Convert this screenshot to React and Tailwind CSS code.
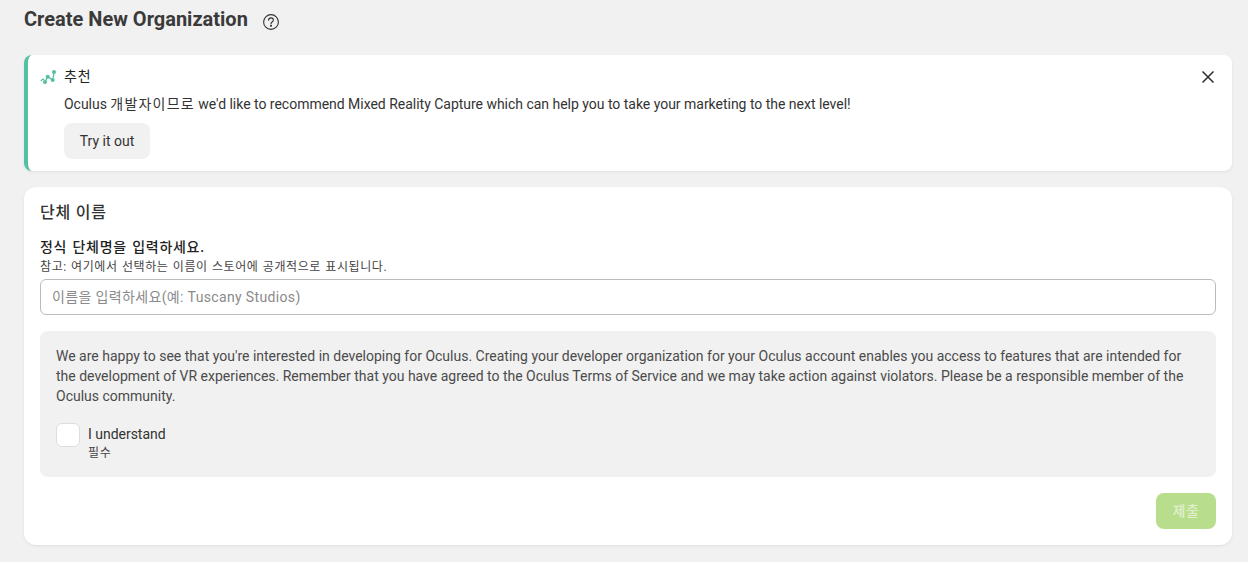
const FONT = "font-['Roboto','Noto_Sans_CJK_KR',sans-serif]"

function HelpIcon() {
  return (
    <svg width="16" height="16" viewBox="0 0 16 16" fill="none" stroke="#333" strokeWidth="1.1" strokeLinecap="round">
      <circle cx="8" cy="8" r="7.4" />
      <path d="M5.6 6.2c0-1.4 1.1-2.3 2.4-2.3s2.4.9 2.4 2.2c0 2-2.4 1.9-2.4 3.6" />
      <circle cx="8" cy="11.8" r="0.5" fill="#333" />
    </svg>
  )
}

function SparkIcon() {
  return (
    <svg width="16" height="14" viewBox="0 0 16 14" fill="none" stroke="#54bfa2" strokeWidth="1.2">
      <path d="M0.8 11 L3 9 L4.2 10 M5 12 L7.7 6.7 L12.7 10 L14.3 1.7" />
      <circle cx="5" cy="12" r="2" fill="#54bfa2" stroke="none" />
      <circle cx="7.7" cy="6.7" r="2" fill="#54bfa2" stroke="none" />
      <circle cx="12.7" cy="10" r="2" fill="#54bfa2" stroke="none" />
      <circle cx="14" cy="2" r="2" fill="#54bfa2" stroke="none" />
    </svg>
  )
}

function CloseIcon() {
  return (
    <svg width="12" height="12" viewBox="0 0 12 12" fill="none" stroke="#2b2b2b" strokeWidth="1.5">
      <path d="M0.5 0.5 L11.5 11.5 M11.5 0.5 L0.5 11.5" />
    </svg>
  )
}

export default function App() {
  return (
    <div className={`${FONT} h-[562px] overflow-hidden bg-[#f1f1f1] pl-6 pr-4 pt-[7px] text-[#333]`}>
      <div className="flex h-[24px] items-center">
        <h1 className="text-xl font-bold leading-6 text-[#3a3a3a]">Create New Organization</h1>
        <span className="ml-[15px] mt-[5px]"><HelpIcon /></span>
      </div>

      <div className="mt-6 flex h-[116px] rounded-lg border-l-4 border-[#54bfa2] bg-white pl-3 pr-4 pt-3 shadow-[0_1px_3px_rgba(0,0,0,0.08)]">
        <div className="mt-[3px] w-6 shrink-0"><SparkIcon /></div>
        <div className="flex-1">
          <div className="text-sm leading-[18px] tracking-[0.8px] text-[#222]">추천</div>
          <p className="mt-[10px] text-sm leading-[18px] tracking-[-0.02px] text-[#333]">
            Oculus <span className="tracking-[1.2px]">개발자이므로</span> we'd like to recommend Mixed Reality Capture which can help you to take your marketing to the next level!
          </p>
          <button className="mt-[10px] h-9 w-[86px] rounded-lg bg-[#f1f1f1] text-sm text-[#333]">Try it out</button>
        </div>
        <div className="mt-[4px] mr-[2px]"><CloseIcon /></div>
      </div>

      <div className="mt-4 h-[358px] rounded-xl bg-white px-4 pt-4 shadow-[0_1px_3px_rgba(0,0,0,0.08)]">
        <h2 className="mt-[1px] text-base font-medium leading-[18px] tracking-[0.8px] text-[#333]">단체 이름</h2>
        <div className="mt-[16px] text-sm font-medium leading-[18px] tracking-[0.7px] [word-spacing:1.2px] text-[#222]">정식 단체명을 입력하세요.</div>
        <div className="mt-[4px] text-xs leading-[15px] tracking-[0.6px] [word-spacing:0.7px] text-[#444]">참고: 여기에서 선택하는 이름이 스토어에 공개적으로 표시됩니다.</div>
        <input
          className="mt-[4px] h-9 w-full rounded-md border border-[#bbb] bg-white px-[11px] text-sm tracking-[0.35px] outline-none placeholder:text-[#8a8a8a]"
          placeholder="이름을 입력하세요(예: Tuscany Studios)"
        />

        <div className="mt-4 h-[146px] rounded-lg bg-[#f1f1f1] px-4 pt-[15px]">
          <p className="text-sm leading-5 text-[#4b4b4b]">
            We are happy to see that you're interested in developing for Oculus. Creating your developer organization for your Oculus account enables you access to features that are intended for the development of VR experiences. Remember that you have agreed to the Oculus Terms of Service and we may take action against violators. Please be a responsible member of the Oculus community.
          </p>
          <div className="mt-[17px] flex">
            <div className="h-6 w-6 rounded-md border border-[#ddd] bg-white" />
            <div className="ml-2 pt-[2px]">
              <div className="text-sm leading-[19px] tracking-[-0.02px] text-[#333]">I understand</div>
              <div className="mt-[2px] text-xs leading-[15px] tracking-[0.8px] text-[#444]">필수</div>
            </div>
          </div>
        </div>

        <div className="mt-4 flex justify-end">
          <button className="h-9 w-[60px] rounded-lg bg-[#b8de8d] text-sm font-medium tracking-[0.5px] text-[#e0f0cc]">제출</button>
        </div>
      </div>
    </div>
  )
}
